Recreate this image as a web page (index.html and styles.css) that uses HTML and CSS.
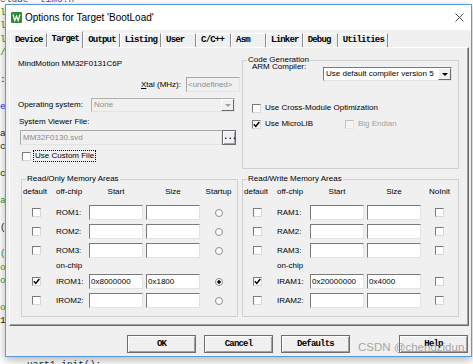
FILE: index.html
```html
<!DOCTYPE html>
<html lang="en">
<head>
  <meta charset="UTF-8">
  <meta name="viewport" content="width=device-width, initial-scale=1.0">
  <title>Options for Target 'BootLoad'</title>
  <link rel="stylesheet" href="styles.css">
</head>
<body>
  <!-- source editor behind the dialog -->
  <div class="editor">
    <div class="code-top"><span class="pp">clude</span>  <span class="str">tim3.h</span></div>
    <div class="code-strip"><span class="cm">l</span>
<span class="cm">l</span>
<span class="cm">l</span>
<span class="cm">/</span>

:

<span class="kw">e</span>

a
c

c

<span class="cm">a</span>

(

<span class="cm">(</span>
<span class="cm">o</span>
<span class="cm">o</span>

<span class="cm">o</span>
1
</div>
    <div class="code-last">uart1_init();</div>
  </div>

  <div class="dialog">
    <div class="titlebar">
      <svg class="app-icon" viewBox="0 0 11 11">
        <rect width="11" height="11" rx="1" fill="#2f8a3b"/>
        <path d="M2 2.5 L3.8 8.5 L5.5 4.2 L7.2 8.5 L9 2.5" stroke="#fff" stroke-width="1.2" fill="none"/>
      </svg>
      <span class="title">Options for Target 'BootLoad'</span>
      <svg class="close" viewBox="0 0 9 9">
        <path d="M0.5 0.5 L8.5 8.5 M8.5 0.5 L0.5 8.5" stroke="#333" stroke-width="0.9"/>
      </svg>
    </div>

    <div class="dialog-body">
      <div class="tabs">
        <span class="tab">Device</span>
        <span class="tab active">Target</span>
        <span class="tab">Output</span>
        <span class="tab">Listing</span>
        <span class="tab">User</span>
        <span class="tab">C/C++</span>
        <span class="tab">Asm</span>
        <span class="tab">Linker</span>
        <span class="tab">Debug</span>
        <span class="tab">Utilities</span>
      </div>

      <div class="panel">
        <!-- left column -->
        <div class="col-left">
          <p class="device-name">MindMotion MM32F0131C6P</p>

          <div class="xtal-row">
            <span class="lbl"><u>X</u>tal (MHz):</span>
            <span class="field disabled xtal">&lt;undefined&gt;</span>
          </div>

          <div class="os-row">
            <span class="lbl os-lbl">Operating system:</span>
            <span class="combo disabled os"><span class="combo-text">None</span><span class="combo-btn"><i class="tri"></i></span></span>
          </div>

          <span class="svf-label">System Viewer File:</span>
          <div class="svf-row">
            <span class="field disabled svf">MM32F0130.svd</span>
            <span class="btn browse">...</span>
          </div>

          <div class="check-row custom">
            <span class="check"></span>
            <span class="focus">Use Custom File</span>
          </div>

          <fieldset class="group mem">
            <legend>Read/Only Memory Areas</legend>
            <div class="mem-grid">
              <span class="hd">default</span>
              <span class="hd name">off-chip</span>
              <span class="hd mid">Start</span>
              <span class="hd mid">Size</span>
              <span class="hd last">Startup</span>

              <span class="check"></span>
              <span class="name">ROM1:</span>
              <span class="field"></span>
              <span class="field"></span>
              <span class="radio"></span>

              <span class="check"></span>
              <span class="name">ROM2:</span>
              <span class="field"></span>
              <span class="field"></span>
              <span class="radio"></span>

              <span class="check"></span>
              <span class="name">ROM3:</span>
              <span class="field"></span>
              <span class="field"></span>
              <span class="radio"></span>

              <span></span>
              <span class="name">on-chip</span>
              <span></span>
              <span></span>
              <span></span>

              <span class="check"><svg viewBox="0 0 7 7"><path d="M0.8 3.2 L2.8 5.4 L6.3 1" stroke="#000" stroke-width="1.5" fill="none"/></svg></span>
              <span class="name">IROM1:</span>
              <span class="field">0x8000000</span>
              <span class="field">0x1800</span>
              <span class="radio on"></span>

              <span class="check"></span>
              <span class="name">IROM2:</span>
              <span class="field"></span>
              <span class="field"></span>
              <span class="radio"></span>
            </div>
          </fieldset>
        </div>

        <!-- right column -->
        <div class="col-right">
          <fieldset class="group codegen">
            <legend>Code Generation</legend>
            <div class="arm-row">
              <span class="lbl arm-lbl">ARM Compiler:</span>
              <span class="combo arm"><span class="combo-text">Use default compiler version 5</span><span class="combo-btn"><i class="tri"></i></span></span>
            </div>
            <div class="check-row opt">
              <span class="check"></span>
              <span class="check-lbl">Use Cross-Module Optimization</span>
            </div>
            <div class="check-row lib">
              <span class="check"><svg viewBox="0 0 7 7"><path d="M0.8 3.2 L2.8 5.4 L6.3 1" stroke="#000" stroke-width="1.5" fill="none"/></svg></span>
              <span class="check-lbl microlib">Use MicroLIB</span>
              <span class="check disabled"></span>
              <span class="check-lbl off">Big Endian</span>
            </div>
          </fieldset>

          <fieldset class="group mem rw">
            <legend>Read/Write Memory Areas</legend>
            <div class="mem-grid">
              <span class="hd">default</span>
              <span class="hd name">off-chip</span>
              <span class="hd mid">Start</span>
              <span class="hd mid">Size</span>
              <span class="hd last">NoInit</span>

              <span class="check"></span>
              <span class="name">RAM1:</span>
              <span class="field"></span>
              <span class="field"></span>
              <span class="check"></span>

              <span class="check"></span>
              <span class="name">RAM2:</span>
              <span class="field"></span>
              <span class="field"></span>
              <span class="check"></span>

              <span class="check"></span>
              <span class="name">RAM3:</span>
              <span class="field"></span>
              <span class="field"></span>
              <span class="check"></span>

              <span></span>
              <span class="name">on-chip</span>
              <span></span>
              <span></span>
              <span></span>

              <span class="check"><svg viewBox="0 0 7 7"><path d="M0.8 3.2 L2.8 5.4 L6.3 1" stroke="#000" stroke-width="1.5" fill="none"/></svg></span>
              <span class="name">IRAM1:</span>
              <span class="field">0x20000000</span>
              <span class="field">0x4000</span>
              <span class="check"></span>

              <span class="check"></span>
              <span class="name">IRAM2:</span>
              <span class="field"></span>
              <span class="field"></span>
              <span class="check"></span>
            </div>
          </fieldset>
        </div>
      </div>

      <div class="buttons">
        <span class="btn">OK</span>
        <span class="btn">Cancel</span>
        <span class="btn">Defaults</span>
        <span class="btn help">Help</span>
      </div>
    </div>
  </div>

  <div class="watermark">CSDN @chengzidun</div>
</body>
</html>
```

FILE: styles.css
```css
body {
  margin: 0;
  width: 473px;
  height: 364px;
  overflow: hidden;
  position: relative;
  background-color: #fff;
  font-family: "Liberation Sans", Arial, sans-serif;
  font-size: 8px;
  color: #000;
}

/* editor in the background */
.editor {
  display: flow-root;
  height: 364px;
  overflow: hidden;
  font-family: "Liberation Mono", "Courier New", monospace;
  font-size: 9.5px;
  color: #1e1e1e;
}
.code-top {
  margin-top: -7px;
  line-height: 13px;
  white-space: pre;
}
.code-strip {
  height: 352px;
  line-height: 13.4px;
  white-space: pre;
  overflow: hidden;
}
.code-last {
  line-height: 13px;
  padding-left: 27px;
  white-space: pre;
}
.pp { color: #4d4d4d; }
.str { color: #9b2d8f; }
.cm { color: #2a9a2a; }
.kw { color: #1a1aff; }

/* dialog window */
.dialog {
  position: absolute;
  left: 5px;
  top: 4px;
  width: 467px;
  height: 353px;
  box-sizing: border-box;
  border: 1px solid #5b9ad5;
  background-color: #f0f0f0;
  box-shadow: 0 3px 9px rgba(0, 0, 0, 0.3);
  display: flex;
  flex-direction: column;
}
.titlebar {
  flex: none;
  height: 25px;
  display: flex;
  align-items: center;
  padding: 0 7px 0 5px;
  background-color: #fff;
}
.app-icon {
  width: 11px;
  height: 11px;
  margin-right: 3px;
}
.title {
  flex: 1;
  font-size: 10px;
}
.close {
  width: 9px;
  height: 9px;
}
.dialog-body {
  flex: 1;
  padding: 0 2px 0 3px;
}

/* tab strip */
.tabs {
  display: flex;
  align-items: flex-end;
  height: 17px;
  padding-left: 1px;
  font-family: "Liberation Mono", "Courier New", monospace;
  font-size: 9px;
  font-weight: bold;
  letter-spacing: -0.8px;
}
.tab {
  box-sizing: border-box;
  min-width: 35px;
  height: 14px;
  padding: 0 3px 0 4px;
  line-height: 13px;
  border-top: 1px solid #fff;
  border-left: 1px solid #fff;
  border-right: 1px solid #8c8c8c;
}
.tab.active {
  position: relative;
  z-index: 1;
  height: 17px;
  margin-bottom: -1px;
  line-height: 14px;
  background-color: #f0f0f0;
}

.panel {
  display: flex;
  height: 279px;
  box-sizing: border-box;
  border: 1px solid;
  border-color: #fff #696969 #696969 #fff;
  box-shadow: inset -1px -1px 0 #a0a0a0;
}
.col-left {
  width: 230px;
  flex: none;
}
.col-right {
  flex: 1;
}

.lbl {
  line-height: 12px;
  white-space: nowrap;
}
.device-name {
  margin: 10px 0 0 8px;
  line-height: 12px;
}
.xtal-row {
  display: flex;
  justify-content: flex-end;
  align-items: center;
  margin-top: 7px;
}
.xtal-row .lbl {
  margin-right: 5px;
}
.os-row {
  display: flex;
  align-items: center;
  margin-top: 6px;
  padding-left: 8px;
}
.os-lbl {
  width: 73px;
}
.svf-label {
  display: block;
  margin: 4px 0 0 9px;
  line-height: 12px;
}
.svf-row {
  display: flex;
  margin-top: 2px;
  padding-left: 10px;
}

/* edit boxes */
.field {
  box-sizing: border-box;
  display: block;
  width: 54px;
  height: 15px;
  padding: 0 1px;
  line-height: 13px;
  white-space: nowrap;
  overflow: hidden;
  border: 1px solid;
  border-color: #7a7a7a #e3e3e3 #e3e3e3 #7a7a7a;
  background-color: #fff;
}
.field.disabled {
  color: #8d8d8d;
  background-color: #f0f0f0;
  border-color: #a8a8a8 #e3e3e3 #e3e3e3 #a8a8a8;
}
.field.svf {
  width: 202px;
  padding-left: 2px;
}

/* combo boxes */
.combo {
  box-sizing: border-box;
  display: flex;
  height: 14px;
  border: 1px solid;
  border-color: #7a7a7a #e3e3e3 #e3e3e3 #7a7a7a;
  background-color: #fff;
}
.combo-text {
  flex: 1;
  padding-left: 2px;
  line-height: 12px;
  white-space: nowrap;
}
.combo-btn {
  box-sizing: border-box;
  width: 13px;
  display: flex;
  align-items: center;
  justify-content: center;
  background-color: #f0f0f0;
  border: 1px solid;
  border-color: #fff #696969 #696969 #fff;
}
.tri {
  width: 0;
  height: 0;
  border-left: 3px solid transparent;
  border-right: 3px solid transparent;
  border-top: 3px solid #000;
}
.combo.disabled {
  background-color: #f0f0f0;
  color: #8d8d8d;
  border-color: #b0b0b0 #e3e3e3 #e3e3e3 #b0b0b0;
}
.combo.disabled .tri {
  border-top-color: #a0a0a0;
}
.combo.os {
  width: 144px;
}
.combo.arm {
  width: 129px;
  margin-top: 6px;
}

/* push buttons */
.btn {
  box-sizing: border-box;
  display: block;
  height: 18px;
  border: 1px solid #6d6d6d;
  box-shadow: inset 1px 1px 0 #fff, inset -1px -1px 0 #a0a0a0;
  background-color: #f0f0f0;
  font-family: "Liberation Mono", "Courier New", monospace;
  font-size: 9px;
  font-weight: bold;
  letter-spacing: -0.8px;
  line-height: 16px;
  text-align: center;
}
.browse {
  width: 14px;
  height: 15px;
  line-height: 12px;
  letter-spacing: -1px;
}
.buttons {
  display: flex;
  gap: 8px;
  margin-top: 9px;
  padding-left: 118px;
}
.buttons .btn {
  width: 69px;
}
.buttons .help {
  margin-left: 41px;
}

/* check boxes and radios */
.check-row {
  display: flex;
  align-items: center;
  height: 12px;
}
.check {
  box-sizing: border-box;
  width: 9px;
  height: 9px;
  display: flex;
  align-items: center;
  justify-content: center;
  border: 1px solid;
  border-color: #7a7a7a #d8d8d8 #d8d8d8 #7a7a7a;
  background-color: #fff;
}
.check svg {
  width: 7px;
  height: 7px;
}
.check.disabled {
  border-color: #c0c0c0 #e6e6e6 #e6e6e6 #c0c0c0;
  background-color: #f4f4f4;
}
.check-lbl {
  margin-left: 4px;
  line-height: 12px;
  white-space: nowrap;
}
.check-lbl.off {
  color: #a0a0a0;
}
.microlib {
  width: 80px;
}
.radio {
  box-sizing: border-box;
  width: 8px;
  height: 8px;
  border-radius: 50%;
  border: 1px solid #8c8c8c;
  background-color: #fff;
}
.radio.on {
  background: radial-gradient(circle, #000 0 1.4px, #fff 2px);
}
.custom {
  margin-top: 5px;
  padding-left: 12px;
}
.focus {
  margin-left: 2px;
  padding: 0 1px;
  line-height: 10px;
  border: 1px dotted #000;
}

/* group boxes */
.group {
  box-sizing: border-box;
  width: 217px;
  min-width: 0;
  margin: 0;
  padding: 0;
  border: 1px solid #cfcfcf;
}
.group legend {
  margin-left: 4px;
  padding: 0 1px;
  line-height: 12px;
}
.col-left .mem {
  margin: 11px 0 0 11px;
}
.mem {
  height: 144px;
}
.codegen {
  height: 115px;
  margin: 6px 0 0 2px;
}
.rw {
  margin: 4px 0 0 2px;
}

.arm-row {
  display: flex;
  align-items: flex-start;
  margin-top: -5px;
  padding-left: 9px;
}
.arm-lbl {
  width: 71px;
}
.opt {
  margin-top: 21px;
  padding-left: 9px;
}
.lib {
  margin-top: 4px;
  padding-left: 9px;
}

.mem-grid {
  display: grid;
  grid-template-columns: 27px 39px 57px 54px 1fr;
  grid-template-rows: 17px repeat(3, 19px) 12px repeat(2, 19px);
  margin: 1px 0 0 1px;
  align-items: center;
}
.mem-grid .check,
.mem-grid .radio {
  justify-self: center;
}
.hd {
  align-self: start;
  line-height: 12px;
  white-space: nowrap;
}
.hd.mid {
  width: 54px;
  text-align: center;
}
.hd.last {
  text-align: center;
}
.name {
  padding-left: 6px;
  line-height: 12px;
  white-space: nowrap;
}

.watermark {
  position: absolute;
  left: 358px;
  top: 340px;
  font-size: 11.5px;
  line-height: 14px;
  color: rgba(130, 130, 130, 0.7);
  white-space: nowrap;
}
```
